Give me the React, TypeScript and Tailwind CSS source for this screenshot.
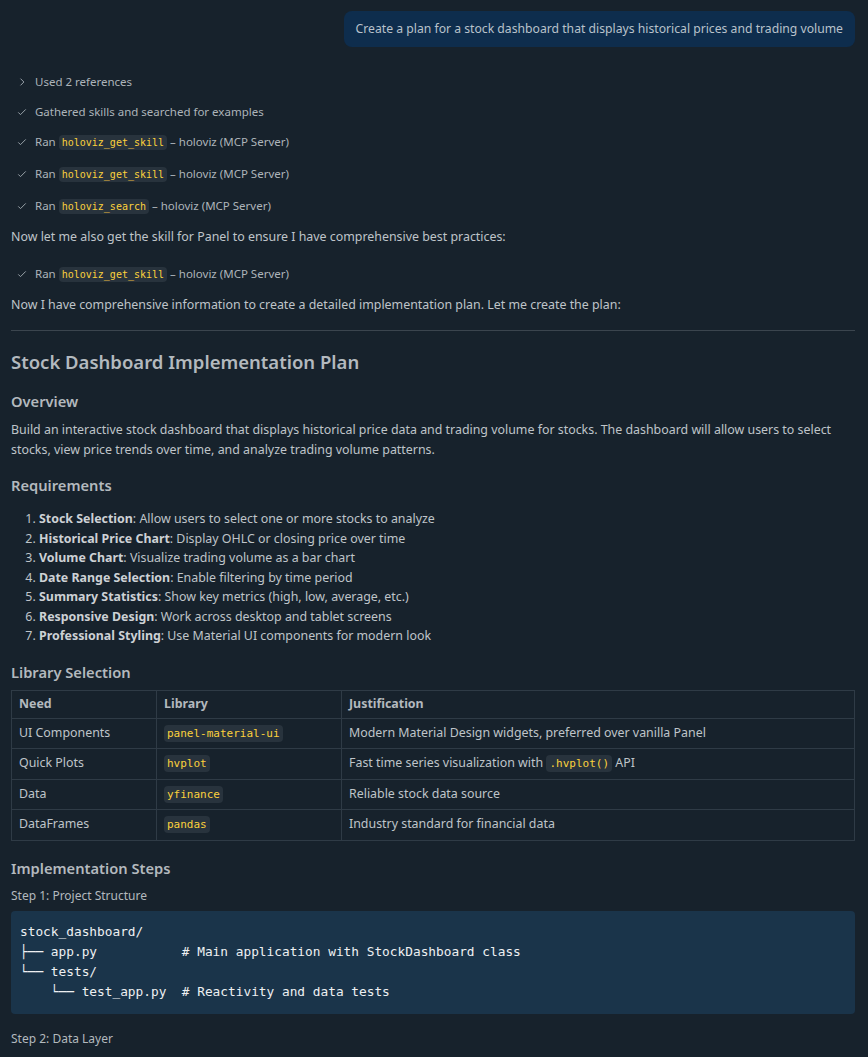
import React from "react";

const font = { fontFamily: '"Noto Sans", "Open Sans", sans-serif' };
const mono = { fontFamily: '"DejaVu Sans Mono", "Liberation Mono", monospace' };

function Check() {
  return (
    <svg width="12" height="12" viewBox="0 0 16 16" className="shrink-0 text-[#9aa3ab]">
      <path d="M3 8.5l3 3 7-7" fill="none" stroke="currentColor" strokeWidth="1.3" />
    </svg>
  );
}
function Chevron() {
  return (
    <svg width="12" height="12" viewBox="0 0 16 16" className="shrink-0 text-[#9aa3ab]">
      <path d="M6 3.5l4.5 4.5L6 12.5" fill="none" stroke="currentColor" strokeWidth="1.3" />
    </svg>
  );
}

function Pill({ children, size = "text-[10px]" }: { children: React.ReactNode; size?: string }) {
  return (
    <span
      style={mono}
      className={`rounded-[4px] bg-[#28333d] px-[3px] py-[2px] ${size} text-[#fbd13c]`}
    >
      {children}
    </span>
  );
}

function RanRow({ tool }: { tool: string }) {
  return (
    <div className="flex h-[32px] items-center gap-[7px] pl-[16px] text-[11.5px] text-[#adb4ba]">
      <Check />
      <span>
        Ran <Pill>{tool}</Pill> – holoviz (MCP Server)
      </span>
    </div>
  );
}

const reqs: [string, string][] = [
  ["Stock Selection", "Allow users to select one or more stocks to analyze"],
  ["Historical Price Chart", "Display OHLC or closing price over time"],
  ["Volume Chart", "Visualize trading volume as a bar chart"],
  ["Date Range Selection", "Enable filtering by time period"],
  ["Summary Statistics", "Show key metrics (high, low, average, etc.)"],
  ["Responsive Design", "Work across desktop and tablet screens"],
  ["Professional Styling", "Use Material UI components for modern look"],
];

const h2 = "text-[14.7px] font-semibold leading-[20px] text-[#b3b9be]";
const cell = "border border-[#2f3b46] px-[7px]";

export default function App() {
  return (
    <div style={font} className="min-h-[1057px] w-full bg-[#17222c] pl-[11px] pr-[13px] pb-6 text-[12.4px] text-[#bfc4c9]">
      <div className="flex justify-end pt-[11px]">
        <div className="rounded-[8px] bg-[#0e2d4d] px-[12px] py-[8px] text-[12.2px] leading-[20px] text-[#b9c2cb]">
          Create a plan for a stock dashboard that displays historical prices and trading volume
        </div>
      </div>

      <div className="mt-[20px]">
        <div className="flex h-[30px] items-center gap-[7px] pl-[5px] text-[11.5px] text-[#adb4ba]">
          <Chevron />
          <span>Used 2 references</span>
        </div>
        <div className="flex h-[29px] items-center gap-[7px] pl-[5px] text-[11.5px] text-[#adb4ba]">
          <Check />
          <span>Gathered skills and searched for examples</span>
        </div>
        <div className="-ml-[11px]">
          <RanRow tool="holoviz_get_skill" />
          <RanRow tool="holoviz_get_skill" />
          <RanRow tool="holoviz_search" />
        </div>
        <p className="flex h-[31px] items-center">
          Now let me also get the skill for Panel to ensure I have comprehensive best practices:
        </p>
        <div className="-ml-[11px] mt-[5px]">
          <RanRow tool="holoviz_get_skill" />
        </div>
        <p className="flex h-[31px] items-center">
          Now I have comprehensive information to create a detailed implementation plan. Let me create the plan:
        </p>
      </div>

      <hr className="mt-[9px] border-0 border-t border-[#3b454e]" />

      <h1 className="mt-[18px] text-[18.5px] font-semibold leading-[26px] text-[#b3b9be]">
        Stock Dashboard Implementation Plan
      </h1>

      <h2 className={`mt-[16px] ${h2}`}>Overview</h2>
      <p className="mt-[9px] leading-[20px]">
        Build an interactive stock dashboard that displays historical price data and trading volume for stocks. The
        dashboard will allow users to select stocks, view price trends over time, and analyze trading volume patterns.
      </p>

      <h2 className={`mt-[15px] ${h2}`}>Requirements</h2>
      <ol className="mt-[14px] list-decimal pl-[28px] leading-[19.5px]">
        {reqs.map(([b, t]) => (
          <li key={b}>
            <span className="font-bold text-[#cdd1d5]">{b}</span>: {t}
          </li>
        ))}
      </ol>

      <h2 className={`mt-[16px] ${h2}`}>Library Selection</h2>
      <table className="mt-[8px] w-full border-collapse border border-[#2f3b46] text-left">
        <thead>
          <tr className="h-[28px]">
            <th className={`w-[145px] font-bold text-[#b3b9be] ${cell}`}>Need</th>
            <th className={`w-[185px] font-bold text-[#b3b9be] ${cell}`}>Library</th>
            <th className={`font-bold text-[#b3b9be] ${cell}`}>Justification</th>
          </tr>
        </thead>
        <tbody>
          {[
            ["UI Components", "panel-material-ui", <>Modern Material Design widgets, preferred over vanilla Panel</>],
            [
              "Quick Plots",
              "hvplot",
              <>
                Fast time series visualization with <Pill size="text-[11px]">.hvplot()</Pill> API
              </>,
            ],
            ["Data", "yfinance", <>Reliable stock data source</>],
            ["DataFrames", "pandas", <>Industry standard for financial data</>],
          ].map(([a, b, c], i) => (
            <tr key={i} className="h-[30.5px]">
              <td className={cell}>{a}</td>
              <td className={cell}>
                <Pill size="text-[11px]">{b}</Pill>
              </td>
              <td className={cell}>{c}</td>
            </tr>
          ))}
        </tbody>
      </table>

      <h2 className={`mt-[17px] ${h2}`}>Implementation Steps</h2>
      <p className="mt-[9px] text-[12px] leading-[18px] text-[#b3b9be]">Step 1: Project Structure</p>
      <pre
        style={mono}
        className="mt-[6px] rounded-[4px] bg-[#1a344a] px-[9px] py-[11.5px] text-[12.8px] leading-[20px] text-[#eef0f2]"
      >
        {"stock_dashboard/\n├── app.py           # Main application with StockDashboard class\n└── tests/\n    └── test_app.py  # Reactivity and data tests"}
      </pre>
      <p className="mt-[16px] text-[12px] leading-[18px] text-[#b3b9be]">Step 2: Data Layer</p>
    </div>
  );
}
